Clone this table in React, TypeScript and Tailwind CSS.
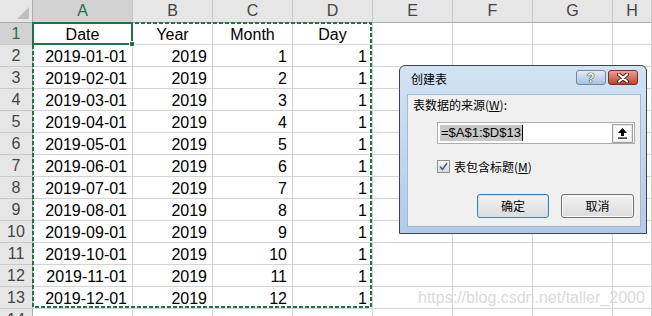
import React from "react";

const COLS = ["A", "B", "C", "D", "E", "F", "G", "H"];
const MONTHS = Array.from({ length: 12 }, (_, i) => i + 1);

const cellBase =
  "border-r border-b border-[#d4d4d4] bg-white text-[16px] leading-[21px] text-black px-[5px] pt-[1px] whitespace-nowrap";

function HeaderCell({ label, active }: { label: string; active?: boolean }) {
  return (
    <div
      className={
        "flex items-center justify-center border-r border-b border-r-[#c9c9c9] border-b-[#ababab] text-[16px] " +
        (active ? "bg-[#d2d2d2] text-[#217346]" : "bg-[#e6e6e6] text-[#444444]")
      }
    >
      {label}
    </div>
  );
}

function RowHeader({ n, active }: { n: number; active?: boolean }) {
  return (
    <div
      className={
        "flex items-center justify-center border-r border-b border-r-[#ababab] border-b-[#c9c9c9] text-[16px] pt-[1px] " +
        (active ? "bg-[#d2d2d2] text-[#217346]" : "bg-[#e6e6e6] text-[#444444]")
      }
    >
      {n}
    </div>
  );
}

function Sheet() {
  const rows: React.ReactNode[] = [];
  rows.push(<RowHeader key="rh1" n={1} active />);
  rows.push(
    <div key="a1" className={cellBase + " relative text-center"}>
      Date
      {/* copy range marquee A1:D13 */}
      <svg width="340" height="286" className="absolute left-[-1px] top-[-1px] pointer-events-none">
        <rect
          x="1"
          y="1"
          width="338"
          height="284"
          fill="none"
          stroke="#217346"
          strokeWidth="2"
          strokeDasharray="4 2"
        />
      </svg>
      {/* active cell */}
      <div className="absolute left-[-1px] top-[-1px] w-[101px] h-[23px] border-2 border-[#217346] pointer-events-none">
        <div className="absolute right-[-4px] bottom-[-4px] w-[6px] h-[6px] bg-[#217346] border border-white" />
      </div>
    </div>
  );
  rows.push(
    <div key="b1" className={cellBase + " text-center"}>
      Year
    </div>
  );
  rows.push(
    <div key="c1" className={cellBase + " text-center"}>
      Month
    </div>
  );
  rows.push(
    <div key="d1" className={cellBase + " text-center"}>
      Day
    </div>
  );
  for (let c = 0; c < 4; c++) rows.push(<div key={"r1e" + c} className={cellBase} />);

  MONTHS.forEach((m) => {
    const r = m + 1;
    const mm = String(m).padStart(2, "0");
    rows.push(<RowHeader key={"rh" + r} n={r} />);
    rows.push(
      <div key={"a" + r} className={cellBase + " text-right"}>
        2019-{mm}-01
      </div>
    );
    rows.push(
      <div key={"b" + r} className={cellBase + " text-right"}>
        2019
      </div>
    );
    rows.push(
      <div key={"c" + r} className={cellBase + " text-right"}>
        {m}
      </div>
    );
    rows.push(
      <div key={"d" + r} className={cellBase + " text-right"}>
        1
      </div>
    );
    for (let c = 0; c < 4; c++) rows.push(<div key={"r" + r + "e" + c} className={cellBase} />);
  });

  rows.push(<RowHeader key="rh14" n={14} />);
  for (let c = 0; c < 8; c++) rows.push(<div key={"r14c" + c} className={cellBase} />);

  return (
    <div className="grid grid-cols-[33px_100px_80px_80px_80px_80px_80px_80px_1fr] grid-rows-[23px_repeat(14,22px)]">
      <div className="flex items-end justify-end p-[3px] border-r border-b border-r-[#ababab] border-b-[#ababab] bg-[#e6e6e6]">
        <svg width="12" height="12" viewBox="0 0 12 12">
          <path d="M12 0 L12 12 L0 12 Z" fill="#bdbdbd" />
        </svg>
      </div>
      {COLS.map((c, i) => (
        <HeaderCell key={c} label={c} active={i === 0} />
      ))}
      {rows}
    </div>
  );
}

function Dialog() {
  return (
    <div className="absolute left-[399px] top-[65px] w-[248px] h-[169px] flex flex-col rounded-t-[6px] border border-[#3a4654] bg-gradient-to-b from-[#d3e3f4] to-[#b2cbe8] pl-[7px] pr-[5px] pb-[6px] font-['Noto_Sans_CJK_SC',sans-serif]">
      <div className="h-[28px] flex items-center shrink-0 pl-[4px] pr-[3px]">
        <span className="text-[12px] text-black leading-none mt-[-2px]">创建表</span>
        <div className="ml-auto flex gap-[2px] mt-[-5px]">
          <div className="w-[30px] h-[15px] rounded-[3px] border border-[#6f88a8] bg-gradient-to-b from-[#e3ecf6] to-[#a8c1df] flex items-center justify-center">
            <span className="text-[12px] font-bold leading-none text-white font-['Liberation_Sans',sans-serif] [text-shadow:0_0_1px_#333,0_0_1px_#333,0_0_1px_#333]">
              ?
            </span>
          </div>
          <div className="w-[30px] h-[15px] rounded-[3px] border border-[#7a2e26] bg-gradient-to-b from-[#e6a294] to-[#c0402f] flex items-center justify-center">
            <svg width="14" height="10" viewBox="0 0 14 10">
              <path d="M3 1.5 L11 8.5 M11 1.5 L3 8.5" stroke="#4a1d18" strokeWidth="4" strokeLinecap="round" />
              <path d="M3 1.5 L11 8.5 M11 1.5 L3 8.5" stroke="#ffffff" strokeWidth="2.2" strokeLinecap="round" />
            </svg>
          </div>
        </div>
      </div>

      <div className="flex-1 bg-[#f0f0f0] border border-[#a3bad5] pl-[5px] flex flex-col">
        <div className="mt-[2px] h-[16px] text-[12px] leading-[16px] text-black">
          表数据的来源(<span className="underline">W</span>):
        </div>

        <div className="mt-[9px] ml-[24px] w-[198px] h-[22px] border border-[#abadb3] bg-white flex items-center pl-[2px] pr-[1px]">
          <span className="bg-[#c8c8c8] text-[13px] leading-[16px] text-black font-['Liberation_Sans',sans-serif] pl-[1px] pr-[1px]">
            =$A$1:$D$13
          </span>
          <span className="w-[1px] h-[16px] bg-black" />
          <div className="ml-auto w-[21px] h-[19px] border border-[#a0a0a0] bg-[#fbfbfb] flex items-center justify-center shadow-[inset_0_0_0_1px_#e8e8e8]">
            <svg width="11" height="12" viewBox="0 0 11 12">
              <path d="M5.5 1 L10 6 L7 6 L7 9 L4 9 L4 6 L1 6 Z" fill="#000" />
              <rect x="1" y="10.5" width="9" height="1.2" fill="#000" />
            </svg>
          </div>
        </div>

        <div className="mt-[16px] ml-[24px] flex items-center gap-[4px] h-[13px]">
          <div className="w-[13px] h-[13px] border border-[#8e8f8f] bg-gradient-to-b from-[#f6f6f6] to-[#dadada] flex items-center justify-center">
            <svg width="9" height="9" viewBox="0 0 9 9">
              <path d="M1 4.5 L3.5 7.5 L8 1" stroke="#4d6185" strokeWidth="1.6" fill="none" />
            </svg>
          </div>
          <span className="text-[12px] leading-[16px] text-black">
            表包含标题(<span className="underline">M</span>)
          </span>
        </div>

        <div className="mt-[21px] ml-[64px] flex gap-[12px]">
          <div className="w-[72px] h-[24px] rounded-[3px] border border-[#3c7fb1] bg-gradient-to-b from-[#f2f2f2] to-[#dcdcdc] shadow-[inset_0_0_0_1px_#c4e5f6] flex items-center justify-center text-[12px] text-black">
            确定
          </div>
          <div className="w-[73px] h-[24px] rounded-[3px] border border-[#707070] bg-gradient-to-b from-[#f2f2f2] to-[#dcdcdc] shadow-[inset_0_0_0_1px_#fbfbfb] flex items-center justify-center text-[12px] text-black">
            取消
          </div>
        </div>
      </div>
    </div>
  );
}

export default function App() {
  return (
    <div className="relative w-[652px] h-[316px] overflow-hidden bg-white font-['Liberation_Sans',sans-serif]">
      <Sheet />
      <Dialog />
      <div className="absolute left-[418px] top-[288px] text-[16px] leading-[20px] text-[#dadada] pointer-events-none">
        https://blog.csdn.net/taller_2000
      </div>
    </div>
  );
}
